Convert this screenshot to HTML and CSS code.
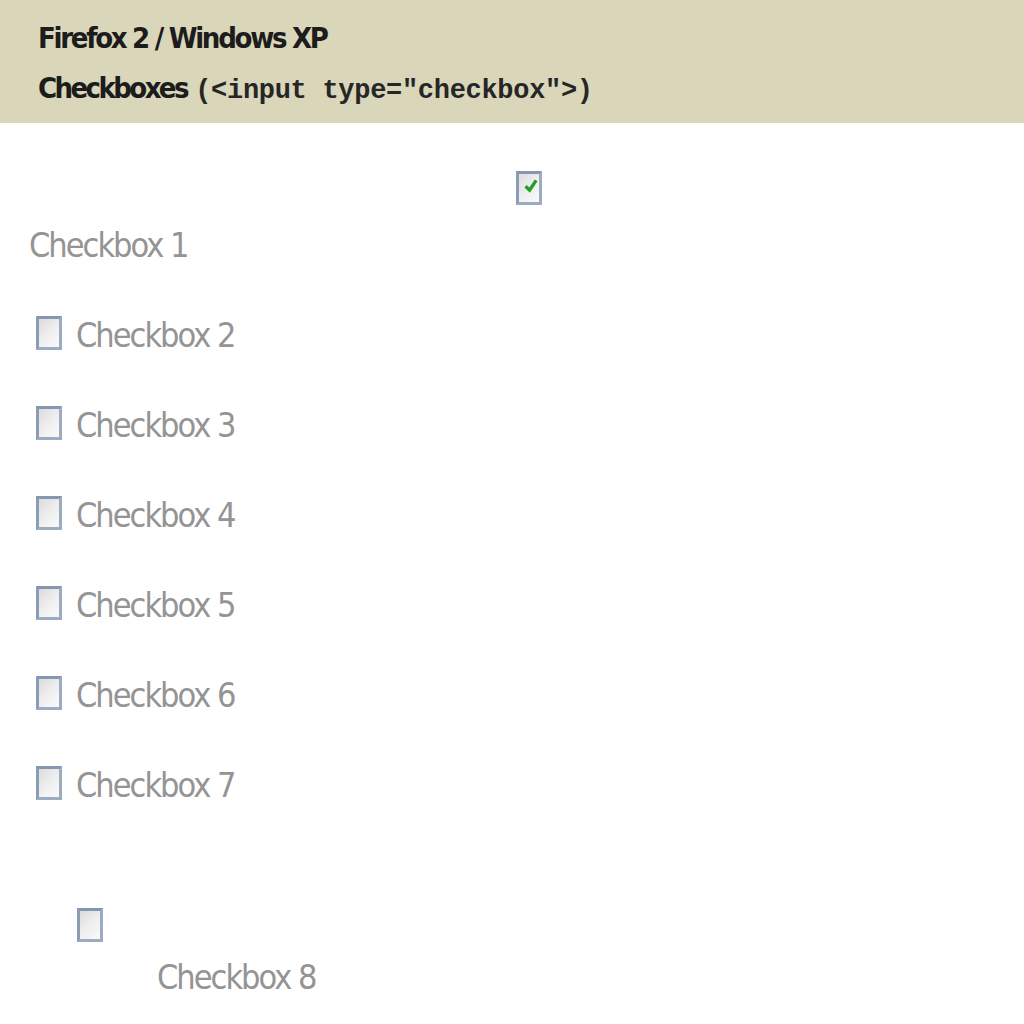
FILE: index.html
```html
<!DOCTYPE html>
<html>
<head>
<meta charset="utf-8">
<link rel="stylesheet" href="styles.css">
</head>
<body>
<header class="hdr">
  <div class="title">Firefox 2 / Windows XP</div>
  <div class="sub"><span class="sub-word">Checkboxes</span> <span class="code">(&lt;input type="checkbox"&gt;)</span></div>
</header>
<main class="list">
  <div class="item item-1">
    <span class="box checked">
      <svg class="tick" viewBox="0 0 10 10" width="14" height="14"><path d="M2 6 L4 8 L8 2" fill="none" stroke="#1fa024" stroke-width="2.4" stroke-linecap="square"/></svg>
    </span>
    <span class="label label-1">Checkbox 1</span>
  </div>
  <div class="row"><span class="box"></span><span class="label">Checkbox 2</span></div>
  <div class="row"><span class="box"></span><span class="label">Checkbox 3</span></div>
  <div class="row"><span class="box"></span><span class="label">Checkbox 4</span></div>
  <div class="row"><span class="box"></span><span class="label">Checkbox 5</span></div>
  <div class="row"><span class="box"></span><span class="label">Checkbox 6</span></div>
  <div class="row"><span class="box"></span><span class="label">Checkbox 7</span></div>
  <div class="item item-8">
    <span class="box"></span>
    <span class="label label-8">Checkbox 8</span>
  </div>
</main>
</body>
</html>
```
FILE: styles.css
```css
html, body {
  margin: 0;
  padding: 0;
  background: #ffffff;
}
body {
  width: 1024px;
  height: 1024px;
  overflow: hidden;
  font-family: "DejaVu Sans Condensed", "Liberation Sans", sans-serif;
}
.hdr {
  background: #d9d6b9;
  height: 123px;
  box-sizing: border-box;
  padding: 18px 0 0 38px;
  color: #1c1c1c;
}
.title {
  font-weight: bold;
  font-size: 29px;
  line-height: 40px;
  letter-spacing: -2.3px;
}
.sub {
  margin-top: 10px;
  font-size: 29px;
  line-height: 40px;
  white-space: nowrap;
}
.sub-word {
  font-weight: bold;
  letter-spacing: -2.6px;
}
.code {
  font-family: "Liberation Mono", "DejaVu Sans Mono", monospace;
  font-weight: bold;
  font-size: 27px;
  letter-spacing: -0.3px;
  color: #262626;
}
.list {
  display: flex;
  flex-direction: column;
  padding-top: 48px;
}
.box {
  display: inline-flex;
  align-items: center;
  justify-content: center;
  width: 26px;
  height: 34px;
  box-sizing: border-box;
  border: 3px solid #9aabc2;
  border-top-color: #8497b2;
  border-left-color: #8a9cb6;
  background: linear-gradient(135deg, #dcdcdc 0%, #eeeeee 50%, #fbfbfb 100%);
  flex: none;
}
.tick {
  margin-left: 3px;
  margin-top: -5px;
}
.label {
  color: #949494;
  font-size: 34px;
  line-height: 40px;
  letter-spacing: -2px;
  white-space: nowrap;
}
.item {
  display: flex;
  flex-direction: column;
  align-items: flex-start;
}
.item-1 .box {
  margin-left: 516px;
}
.label-1 {
  margin-top: 20px;
  margin-left: 29px;
}
.row {
  display: flex;
  align-items: center;
  gap: 14px;
  height: 34px;
  margin-top: 56px;
  padding-left: 36px;
}
.item-1 + .row {
  margin-top: 51px;
}
.row .label {
  margin-top: 4px;
}
.item-8 {
  margin-top: 108px;
}
.item-8 .box {
  margin-left: 77px;
}
.label-8 {
  margin-top: 15px;
  margin-left: 157px;
}
```
